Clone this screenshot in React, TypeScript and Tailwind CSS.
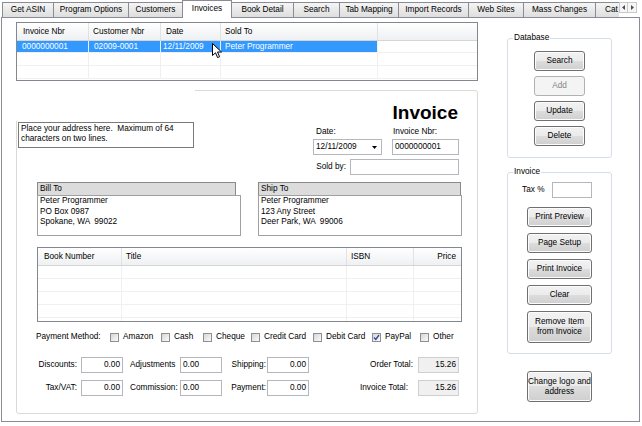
import React from "react";

const TABS = [
  { label: "Get ASIN", cls: "w-[51px]" },
  { label: "Program Options", cls: "w-[75px]" },
  { label: "Customers", cls: "w-[54px]" },
  { label: "Invoices", cls: "w-[50px]", active: true },
  { label: "Book Detail", cls: "w-[61px] border-l-0" },
  { label: "Search", cls: "w-[46px]" },
  { label: "Tab Mapping", cls: "w-[59px]" },
  { label: "Import Records", cls: "w-[70px]" },
  { label: "Web Sites", cls: "w-[55px]" },
  { label: "Mass Changes", cls: "w-[72px]" },
];

const PAYMENTS = [
  { label: "Amazon", cls: "w-[51px]" },
  { label: "Cash", cls: "w-[42px]" },
  { label: "Cheque", cls: "w-[48px]" },
  { label: "Credit Card", cls: "w-[62px]" },
  { label: "Debit Card", cls: "w-[59px]" },
  { label: "PayPal", cls: "w-[48px]", checked: true },
  { label: "Other", cls: "w-[40px]" },
];

function WinButton({ children, className = "", disabled = false }: { children: React.ReactNode; className?: string; disabled?: boolean }) {
  return (
    <button
      type="button"
      className={`flex items-center justify-center text-center leading-[10px] rounded-[3px] border ${
        disabled
          ? "border-[#adb2b5] bg-[#f4f4f4] text-[#838383]"
          : "border-[#707070] text-black bg-[linear-gradient(to_bottom,#f2f2f2_0%,#ebebeb_50%,#dddddd_50%,#cfcfcf_100%)] shadow-[inset_0_0_0_1px_#fcfcfc]"
      } ${className}`}
    >
      {children}
    </button>
  );
}

function TextBox({ value = "", className = "" }: { value?: string; className?: string }) {
  return <div className={`h-[16px] border border-[#b5b7bd] flex items-center whitespace-nowrap ${className}`}>{value}</div>;
}

function CheckBox({ checked = false }: { checked?: boolean }) {
  return (
    <div className="w-[9px] h-[9px] border border-[#8f8f8f] bg-gradient-to-br from-[#d6d6d6] to-[#fbfbfb] flex items-center justify-center">
      {checked && (
        <svg width="7" height="7" viewBox="0 0 7 7">
          <path d="M1 3.5 L2.8 5.5 L6 1" fill="none" stroke="#2c4a9a" strokeWidth="1.3" />
        </svg>
      )}
    </div>
  );
}

function GroupBox({ title, className = "", children }: { title: string; className?: string; children: React.ReactNode }) {
  return (
    <div className={`relative w-[105px] border border-[#d5dfe5] rounded-[3px] ${className}`}>
      <div className="absolute left-[5px] -top-[6px] bg-white px-px leading-[10px]">{title}</div>
      {children}
    </div>
  );
}

function AddressBox({ title, lines, headerCls, boxCls }: { title: string; lines: string[]; headerCls: string; boxCls: string }) {
  return (
    <div className="flex flex-col">
      <div className={`h-[14px] bg-[#dcdcdc] border border-[#8a8a8a] pl-[2px] flex items-center ${headerCls}`}>{title}</div>
      <div className={`-mt-px h-[41px] border border-[#a0a0a0] pl-[2px] leading-[10.5px] whitespace-pre ${boxCls}`}>
        {lines.map((l) => (
          <div key={l}>{l}</div>
        ))}
      </div>
    </div>
  );
}

export default function App() {
  return (
    <div className="w-[642px] h-[426px] bg-white relative overflow-hidden font-['Liberation_Sans',Arial,sans-serif] text-[8.25px] leading-[10px] text-black">
      {/* Tab strip */}
      <div className="relative z-10 flex items-end h-[18px] pl-[2px]">
        {TABS.map((t) =>
          t.active ? (
            <div key={t.label} className={`h-[18px] pb-[2px] bg-white border-l border-t border-r border-[#898c95] flex items-center justify-center whitespace-nowrap ${t.cls}`}>
              {t.label}
            </div>
          ) : (
            <div key={t.label} className={`h-[15px] mb-px border-l border-t border-[#898c95] bg-gradient-to-b from-[#f5f5f5] to-[#dedede] flex items-center justify-center whitespace-nowrap ${t.cls}`}>
              {t.label}
            </div>
          )
        )}
        <div className="h-[15px] mb-px w-[24px] border-l border-t border-[#898c95] bg-gradient-to-b from-[#f5f5f5] to-[#dedede] flex items-center pl-[9px] overflow-hidden whitespace-nowrap">
          Cat
        </div>
        <div className="self-start mt-[2px] flex">
          <div className="w-[9px] h-[11px] border border-[#c9c9c9] bg-[#f6f6f6] flex items-center justify-center">
            <svg width="3" height="5" viewBox="0 0 3 5"><path d="M3 0 L0 2.5 L3 5 Z" fill="#4d4d4d" /></svg>
          </div>
          <div className="w-[9px] h-[11px] border border-l-0 border-[#c9c9c9] bg-[#f6f6f6] flex items-center justify-center">
            <svg width="3" height="5" viewBox="0 0 3 5"><path d="M0 0 L3 2.5 L0 5 Z" fill="#4d4d4d" /></svg>
          </div>
        </div>
      </div>

      {/* Tab page */}
      <div className="-mt-px ml-px w-[639px] h-[405px] border border-[#898c95] flex">
        {/* Left column */}
        <div className="w-[488px] flex flex-col pl-[14px]">
          {/* Invoices grid */}
          <div className="mt-[4px] w-[462px] h-[59px] border border-[#828790] flex flex-col">
            <div className="h-[18px] flex border-b border-[#d5d5d5] bg-gradient-to-b from-white to-[#eff0f2]">
              <div className="w-[72px] border-r border-[#e1e2e5] pl-[6px] flex items-center">Invoice Nbr</div>
              <div className="w-[72px] border-r border-[#e1e2e5] pl-[4px] flex items-center">Customer Nbr</div>
              <div className="w-[60px] border-r border-[#e1e2e5] pl-[5px] flex items-center">Date</div>
              <div className="w-[157px] border-r border-[#e1e2e5] pl-[4px] flex items-center">Sold To</div>
              <div className="flex-1" />
            </div>
            <div className="h-[12px] flex border-b border-[#f0f0f0] text-white">
              <div className="w-[72px] border-r border-[#e8f1fb] bg-[#3399ff] pl-[5px] flex items-center">0000000001</div>
              <div className="w-[72px] border-r border-[#e8f1fb] bg-[#3399ff] pl-[5px] flex items-center">02009-0001</div>
              <div className="w-[60px] border-r border-[#e8f1fb] bg-[#3399ff] pl-[2px] flex items-center">12/11/2009</div>
              <div className="w-[157px] border-r border-[#f0f0f0] bg-[#3399ff] pl-[4px] flex items-center">Peter Programmer</div>
              <div className="flex-1" />
            </div>
            {[0, 1].map((i) => (
              <div key={i} className="h-[13px] flex border-b border-[#f0f0f0]">
                <div className="w-[72px] border-r border-[#f0f0f0]" />
                <div className="w-[72px] border-r border-[#f0f0f0]" />
                <div className="w-[60px] border-r border-[#f0f0f0]" />
                <div className="w-[157px] border-r border-[#f0f0f0]" />
                <div className="flex-1" />
              </div>
            ))}
          </div>

          {/* Invoice panel */}
          <div className="relative mt-[9px] w-[462px] h-[324px] border border-[#d9d9d9] rounded-[3px] flex flex-col">
            <div className="absolute -left-px -top-px w-[179px] h-[31px] bg-white" />

            <div className="flex justify-between items-start">
              <div className="ml-px mt-[31px] w-[176px] h-[26px] border border-[#7a7a7a] px-[2px] pt-px leading-[10px]">
                <div>Place your address here.&nbsp; Maximum of 64</div>
                <div>characters on two lines.</div>
              </div>
              <div className="w-[146px] mr-[18px] flex flex-col">
                <div className="mt-[12px] text-right pr-px text-[19px] font-bold leading-[19px]">Invoice</div>
                <div className="mt-[5px] flex h-[10px]">
                  <div className="w-[79px] pl-[3px]">Date:</div>
                  <div className="pl-px">Invoice Nbr:</div>
                </div>
                <div className="mt-[2px] flex gap-[10px]">
                  <div className="w-[69px] h-[16px] border border-[#b5b7bd] flex items-center justify-between pl-[2px] pr-[4px]">
                    <span>12/11/2009</span>
                    <svg width="5" height="3" viewBox="0 0 5 3"><path d="M0 0 L5 0 L2.5 3 Z" fill="#000" /></svg>
                  </div>
                  <TextBox value="0000000001" className="w-[67px] pl-[2px]" />
                </div>
                <div className="mt-[4px] flex items-center justify-end">
                  <span className="mr-[4px]">Sold by:</span>
                  <TextBox className="w-[109px]" />
                </div>
              </div>
            </div>

            {/* Bill To / Ship To */}
            <div className="mt-[7px] ml-[20px] flex gap-[17px]">
              <AddressBox title="Bill To" lines={["Peter Programmer", "PO Box 0987", "Spokane, WA  99022"]} headerCls="w-[199px]" boxCls="w-[204px]" />
              <AddressBox title="Ship To" lines={["Peter Programmer", "123 Any Street", "Deer Park, WA  99006"]} headerCls="w-[203px]" boxCls="w-[204px]" />
            </div>

            {/* Book grid */}
            <div className="mt-[11px] ml-[20px] w-[425px] h-[75px] border border-[#828790] flex flex-col overflow-hidden">
              <div className="h-[18px] shrink-0 flex border-b border-[#d5d5d5] bg-gradient-to-b from-white to-[#eff0f2]">
                <div className="w-[84px] border-r border-[#e1e2e5] pl-[6px] flex items-center">Book Number</div>
                <div className="w-[225px] border-r border-[#e1e2e5] pl-[4px] flex items-center">Title</div>
                <div className="w-[67px] border-r border-[#e1e2e5] pl-[4px] flex items-center">ISBN</div>
                <div className="flex-1 pr-[5px] flex items-center justify-end">Price</div>
              </div>
              {[0, 1, 2, 3, 4].map((i) => (
                <div key={i} className="h-[13px] shrink-0 flex border-b border-[#f0f0f0]">
                  <div className="w-[84px] border-r border-[#f0f0f0]" />
                  <div className="w-[225px] border-r border-[#f0f0f0]" />
                  <div className="w-[67px] border-r border-[#f0f0f0]" />
                  <div className="flex-1" />
                </div>
              ))}
            </div>

            {/* Payment method */}
            <div className="mt-[9px] ml-[19px] h-[12px] flex items-center">
              <div className="w-[74px]">Payment Method:</div>
              {PAYMENTS.map((p) => (
                <div key={p.label} className={`flex items-center gap-[4px] whitespace-nowrap ${p.cls}`}>
                  <CheckBox checked={p.checked} />
                  <span>{p.label}</span>
                </div>
              ))}
            </div>

            {/* Totals */}
            <div className="mt-[14px] h-[16px] flex items-center">
              <div className="w-[62px] text-right pr-[2px]">Discounts:</div>
              <TextBox value="0.00" className="ml-[2px] w-[42px] justify-end pr-[2px]" />
              <div className="ml-[7px] w-[50px]">Adjustments</div>
              <TextBox value="0.00" className="w-[42px] pl-[2px]" />
              <div className="w-[45px] text-right pr-px">Shipping:</div>
              <TextBox value="0.00" className="w-[42px] justify-end pr-[2px]" />
              <div className="w-[109px] text-right pr-[5px]">Order Total:</div>
              <TextBox value="15.26" className="w-[41px] justify-end pr-[2px] bg-[#f0f0f0] border-[#cfcfcf]" />
            </div>
            <div className="mt-[7px] h-[16px] flex items-center">
              <div className="w-[62px] text-right pr-[2px]">Tax/VAT:</div>
              <TextBox value="0.00" className="ml-[2px] w-[42px] justify-end pr-[2px]" />
              <div className="ml-[7px] w-[50px]">Commission:</div>
              <TextBox value="0.00" className="w-[42px] pl-[2px]" />
              <div className="w-[45px] text-right pr-px">Payment:</div>
              <TextBox value="0.00" className="w-[42px] justify-end pr-[2px]" />
              <div className="w-[109px] text-right pr-[10px]">Invoice Total:</div>
              <TextBox value="15.26" className="w-[41px] justify-end pr-[2px] bg-[#f0f0f0] border-[#cfcfcf]" />
            </div>
          </div>
        </div>

        {/* Right column */}
        <div className="flex-1 flex flex-col pl-[17px]">
          <GroupBox title="Database" className="mt-[20px] h-[120px]">
            <div className="flex flex-col items-center pt-[12px] gap-[5px]">
              <WinButton className="w-[51px] h-[20px]">Search</WinButton>
              <WinButton className="w-[51px] h-[20px]" disabled>Add</WinButton>
              <WinButton className="w-[51px] h-[20px]">Update</WinButton>
              <WinButton className="w-[51px] h-[20px]">Delete</WinButton>
            </div>
          </GroupBox>

          <GroupBox title="Invoice" className="mt-[14px] h-[182px]">
            <div className="pt-[9px] pl-[14px] flex items-center">
              <span className="w-[30px]">Tax %</span>
              <TextBox className="w-[40px] h-[15px]" />
            </div>
            <div className="mt-[9px] flex flex-col items-center gap-[6px]">
              <WinButton className="w-[65px] h-[20px]">Print Preview</WinButton>
              <WinButton className="w-[65px] h-[20px]">Page Setup</WinButton>
              <WinButton className="w-[65px] h-[20px]">Print Invoice</WinButton>
              <WinButton className="w-[65px] h-[20px]">Clear</WinButton>
              <WinButton className="w-[65px] h-[32px]">
                Remove Item
                <br />
                from Invoice
              </WinButton>
            </div>
          </GroupBox>

          <WinButton className="mt-[17px] ml-[20px] w-[65px] h-[31px]">
            Change logo and
            <br />
            address
          </WinButton>
        </div>
      </div>

      {/* Mouse pointer over the grid */}
      <svg className="absolute left-[212px] top-[43px]" width="11" height="16" viewBox="0 0 11 16">
        <path d="M0.5 0.5 L0.5 12.5 L3.5 9.8 L5.6 14.6 L7.6 13.7 L5.5 9 L9.5 9 Z" fill="#fff" stroke="#000" strokeWidth="1" strokeLinejoin="round" />
      </svg>
    </div>
  );
}
